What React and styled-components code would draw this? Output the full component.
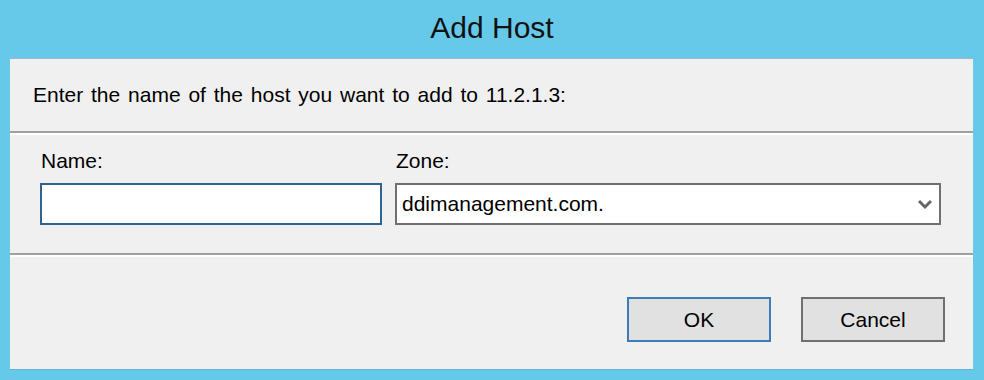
import styled, { createGlobalStyle } from "styled-components";

const Global = createGlobalStyle`
  html, body {
    margin: 0;
    padding: 0;
    background: #66c9e9;
  }
  body {
    font-family: "Liberation Sans", Arial, sans-serif;
    color: #000;
  }
`;

const Window = styled.div`
  width: 984px;
  height: 380px;
  display: flex;
  flex-direction: column;
  background: #66c9e9;
`;

const TitleBar = styled.div`
  height: 58px;
  display: flex;
  align-items: center;
  justify-content: center;
  font-size: 30px;
  color: #111;
  padding-bottom: 3px;
  box-sizing: border-box;
`;

const Panel = styled.div`
  margin: 0 11px 0 10px;
  height: 312px;
  background: #f0f0f0;
  border-top: 1px solid #9bb7c6;
  border-bottom: 1px solid #5fb3d3;
  box-sizing: border-box;
  display: flex;
  flex-direction: column;
`;

const Prompt = styled.div`
  height: 72px;
  display: flex;
  align-items: center;
  padding: 0 23px;
  font-size: 21px;
  word-spacing: 2px;
`;

const Divider = styled.div`
  height: 2px;
  background: #a0a0a0;
  border-bottom: 2px solid #fff;
`;

const Fields = styled.div`
  height: 118px;
  display: flex;
  gap: 13px;
  padding: 13px 0 0 30px;
  box-sizing: border-box;
`;

const Field = styled.div`
  display: flex;
  flex-direction: column;
  gap: 10px;
`;

const Label = styled.label`
  font-size: 21px;
  padding-left: 1px;
  line-height: 25px;
`;

const TextBox = styled.div`
  width: ${({ $w }) => $w}px;
  height: 42px;
  box-sizing: border-box;
  background: #fff;
  border: 2px solid ${({ $focus }) => ($focus ? "#2f6490" : "#707070")};
  display: flex;
  align-items: center;
  justify-content: space-between;
  padding: 0 7px 0 5px;
  font-size: 21px;
`;

const Chevron = styled.svg`
  width: 14px;
  height: 11px;
`;

const Footer = styled.div`
  flex: 1;
  display: flex;
  justify-content: flex-end;
  gap: 30px;
  padding: 40px 28px 0 0;
  box-sizing: border-box;
`;

const Button = styled.button`
  width: 144px;
  height: 45px;
  box-sizing: border-box;
  background: #e1e1e1;
  border: 2px solid ${({ $default }) => ($default ? "#3b7db4" : "#707070")};
  font-family: inherit;
  font-size: 21px;
  color: #000;
  padding: 0;
`;

export default function App() {
  return (
    <>
      <Global />
      <Window>
        <TitleBar>Add Host</TitleBar>
        <Panel>
          <Prompt>Enter the name of the host you want to add to 11.2.1.3:</Prompt>
          <Divider />
          <Fields>
            <Field>
              <Label>Name:</Label>
              <TextBox $w={342} $focus />
            </Field>
            <Field>
              <Label>Zone:</Label>
              <TextBox $w={546}>
                <span>ddimanagement.com.</span>
                <Chevron viewBox="0 0 14 11">
                  <path d="M1 2 L7 8 L13 2" fill="none" stroke="#666" strokeWidth="3" />
                </Chevron>
              </TextBox>
            </Field>
          </Fields>
          <Divider />
          <Footer>
            <Button $default>OK</Button>
            <Button>Cancel</Button>
          </Footer>
        </Panel>
      </Window>
    </>
  );
}
